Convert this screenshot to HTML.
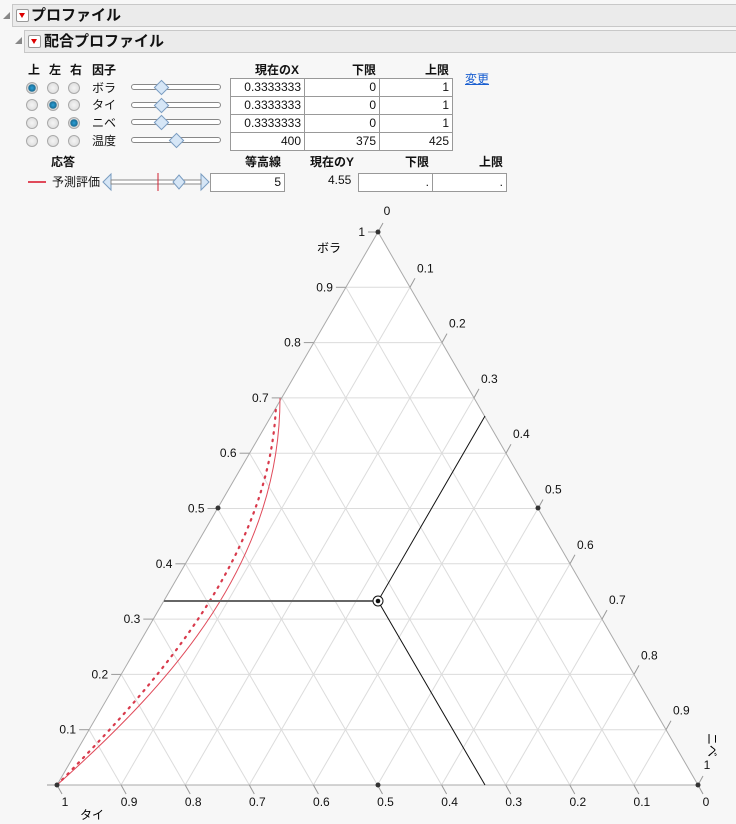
<!DOCTYPE html>
<html><head><meta charset="utf-8"><style>
body{margin:0;width:736px;height:824px;background:#f7f7f7;font-family:"Liberation Sans","Noto Sans CJK JP",sans-serif;font-size:12px;color:#111;position:relative;overflow:hidden}
.a{position:absolute;white-space:nowrap}
.hdr{position:absolute;height:21px;background:#ebebeb;border:1px solid #c8c8c8;right:-2px}
.hdr b{position:absolute;top:0;font-size:15px;line-height:21px}
.dd{position:absolute;width:11px;height:11px;border:1px solid #999;background:#fff;border-radius:2px}
.dd:after{content:"";position:absolute;left:2px;top:3px;border-left:3.5px solid transparent;border-right:3.5px solid transparent;border-top:5px solid #d00}
.tri{position:absolute;width:0;height:0;border-left:7px solid transparent;border-bottom:7px solid #888}
.box{position:absolute;background:#fff;border:1px solid #999;box-sizing:border-box;text-align:right;padding-right:3px;line-height:16px;font-size:12px}
.rad{position:absolute;width:10px;height:10px;border-radius:50%;border:1px solid #aaa;background:radial-gradient(#f4f4f4,#d8d8d8)}
.rad.on{background:radial-gradient(#2aa0d8 0,#1a6c94 50%,#d8d8d8 55%)}
.trk{position:absolute;height:4px;border:1px solid #888;border-radius:3px;background:#fff}
.dia{position:absolute;width:9px;height:9px;background:#d6e6f6;border:1px solid #7a9cc0;transform:rotate(45deg)}
</style></head><body>
<div class="tri" style="left:3px;top:12px"></div>
<div class="hdr" style="left:12px;top:4px;width:724px"><div class="dd" style="left:3px;top:4px"></div><b style="left:18px">プロファイル</b></div>
<div class="tri" style="left:15px;top:37px"></div>
<div class="hdr" style="left:24px;top:30px;width:712px"><div class="dd" style="left:3px;top:4px"></div><b style="left:19px">配合プロファイル</b></div>

<div class="a" style="left:28px;top:61px;font-weight:bold">上</div>
<div class="a" style="left:49px;top:61px;font-weight:bold">左</div>
<div class="a" style="left:70px;top:61px;font-weight:bold">右</div>
<div class="a" style="left:92px;top:61px;font-weight:bold">因子</div>
<div class="a" style="left:255px;top:61px;font-weight:bold">現在のX</div>
<div class="a" style="left:352px;top:61px;font-weight:bold">下限</div>
<div class="a" style="left:425px;top:61px;font-weight:bold">上限</div>
<div class="a" style="left:465px;top:70px;color:#1a5fd0;text-decoration:underline">変更</div>

<div class="rad on" style="left:26px;top:82px"></div><div class="rad" style="left:47px;top:82px"></div><div class="rad" style="left:68px;top:82px"></div>
<div class="rad" style="left:26px;top:99px"></div><div class="rad on" style="left:47px;top:99px"></div><div class="rad" style="left:68px;top:99px"></div>
<div class="rad" style="left:26px;top:117px"></div><div class="rad" style="left:47px;top:117px"></div><div class="rad on" style="left:68px;top:117px"></div>
<div class="rad" style="left:26px;top:135px"></div><div class="rad" style="left:47px;top:135px"></div><div class="rad" style="left:68px;top:135px"></div>
<div class="a" style="left:92px;top:79px">ボラ</div>
<div class="a" style="left:92px;top:96px">タイ</div>
<div class="a" style="left:92px;top:114px">ニベ</div>
<div class="a" style="left:92px;top:132px">温度</div>
<div class="trk" style="left:131px;top:84px;width:88px"></div><div class="dia" style="left:156px;top:82px"></div>
<div class="trk" style="left:131px;top:102px;width:88px"></div><div class="dia" style="left:156px;top:100px"></div>
<div class="trk" style="left:131px;top:119px;width:88px"></div><div class="dia" style="left:156px;top:117px"></div>
<div class="trk" style="left:131px;top:137px;width:88px"></div><div class="dia" style="left:171px;top:135px"></div>

<div class="box" style="left:230px;top:78px;width:75px;height:19px">0.3333333</div>
<div class="box" style="left:304px;top:78px;width:76px;height:19px">0</div>
<div class="box" style="left:379px;top:78px;width:74px;height:19px">1</div>
<div class="box" style="left:230px;top:96px;width:75px;height:19px">0.3333333</div>
<div class="box" style="left:304px;top:96px;width:76px;height:19px">0</div>
<div class="box" style="left:379px;top:96px;width:74px;height:19px">1</div>
<div class="box" style="left:230px;top:114px;width:75px;height:19px">0.3333333</div>
<div class="box" style="left:304px;top:114px;width:76px;height:19px">0</div>
<div class="box" style="left:379px;top:114px;width:74px;height:19px">1</div>
<div class="box" style="left:230px;top:132px;width:75px;height:19px">400</div>
<div class="box" style="left:304px;top:132px;width:76px;height:19px">375</div>
<div class="box" style="left:379px;top:132px;width:74px;height:19px">425</div>

<div class="a" style="left:51px;top:153px;font-weight:bold">応答</div>
<div class="a" style="left:245px;top:153px;font-weight:bold">等高線</div>
<div class="a" style="left:310px;top:153px;font-weight:bold">現在のY</div>
<div class="a" style="left:405px;top:153px;font-weight:bold">下限</div>
<div class="a" style="left:479px;top:153px;font-weight:bold">上限</div>
<div class="a" style="left:28px;top:181px;width:18px;height:2px;background:#e04a5a"></div>
<div class="a" style="left:52px;top:173px">予測評価</div>
<svg class="a" style="left:102px;top:172px" width="108" height="20"><path d="M9,2 L1,10 L9,18 Z M99,2 L107,10 L99,18 Z" fill="#d6e6f6" stroke="#7a9cc0"/><rect x="9" y="8" width="90" height="4" fill="#fff" stroke="#888"/><line x1="56" y1="1" x2="56" y2="19" stroke="#d02030"/><path d="M77,3 L83,10 L77,17 L71,10Z" fill="#d6e6f6" stroke="#7a9cc0"/></svg>
<div class="box" style="left:210px;top:173px;width:75px;height:19px">5</div>
<div class="a" style="left:328px;top:173px">4.55</div>
<div class="box" style="left:358px;top:173px;width:75px;height:19px">.</div>
<div class="box" style="left:432px;top:173px;width:75px;height:19px">.</div>

<svg class="a" style="left:0;top:0" width="736" height="824" id="s" font-family="Liberation Sans,Noto Sans CJK JP,sans-serif" font-size="12">
<polygon points="378,232 57,785 698,785" fill="#fff"/>
<g id="g" stroke="#dcdcdc" stroke-width="1"></g>
<polygon points="378,232 57,785 698,785" fill="none" stroke="#aaa"/>
<g id="lb" fill="#111"></g>
<path d="M57,785 C175,680 280,560 280,398" fill="none" stroke="#e04a5a" stroke-width="1"/>
<path d="M57,785 C150,690 270,560 276,405" fill="none" stroke="#d83a4c" stroke-width="2.2" stroke-dasharray="1.5,6" stroke-linecap="round"/>
<line x1="164" y1="601" x2="378" y2="601" stroke="#666" stroke-width="2"/>
<line x1="378" y1="601" x2="485" y2="416" stroke="#111"/>
<line x1="378" y1="601" x2="485" y2="785" stroke="#111"/>
<circle cx="378" cy="601" r="5" fill="#fff" stroke="#111"/><circle cx="378" cy="601" r="2.3" fill="#111"/>
<g fill="#333"><circle cx="378" cy="232" r="2.5"/><circle cx="57" cy="785" r="2.5"/><circle cx="698" cy="785" r="2.5"/><circle cx="378" cy="785" r="2.5"/><circle cx="218" cy="508" r="2.5"/><circle cx="538" cy="508" r="2.5"/></g>
<text x="317" y="252">ボラ</text>
<text x="80" y="819">タイ</text>
<text transform="translate(708,733) rotate(90)">ニベ</text>
</svg>
<script>
var T=[378,232],L=[57,785],R=[698,785],g=document.getElementById('g'),lb=document.getElementById('lb'),ns='http://www.w3.org/2000/svg';
function P(a,b,c){return[a*T[0]+b*L[0]+c*R[0],a*T[1]+b*L[1]+c*R[1]]}
function ln(p,q,par,col){var e=document.createElementNS(ns,'line');e.setAttribute('x1',p[0]);e.setAttribute('y1',p[1]);e.setAttribute('x2',q[0]);e.setAttribute('y2',q[1]);if(col)e.setAttribute('stroke',col);(par||g).appendChild(e)}
function tx(x,y,s,anc){var e=document.createElementNS(ns,'text');e.setAttribute('x',x);e.setAttribute('y',y);if(anc)e.setAttribute('text-anchor',anc);e.textContent=s;lb.appendChild(e)}
for(var i=1;i<10;i++){var k=i/10;
ln(P(k,1-k,0),P(k,0,1-k));ln(P(1-k,k,0),P(0,k,1-k));ln(P(1-k,0,k),P(0,1-k,k));}
for(var i=0;i<=10;i++){var k=i/10,s=(i==0?'0':i==10?'1':k.toFixed(1));
var p=P(k,1-k,0);ln([p[0]-10,p[1]],p,lb,'#999');if(i>0)tx(p[0]-13,p[1]+4,s,'end');
var q=P(1-k,0,k);ln(q,[q[0]+5,q[1]-9],lb,'#999');if(i>0&&i<10)tx(q[0]+7,q[1]-15,s);
var r=P(0,k,1-k);ln(r,[r[0]+5,r[1]+9],lb,'#999');tx(r[0]+8,r[1]+21,(i==0?'0':i==10?'1':k.toFixed(1)),'middle');}
tx(387,215,'0','middle');tx(707,769,'1','middle');
</script>
</body></html>
